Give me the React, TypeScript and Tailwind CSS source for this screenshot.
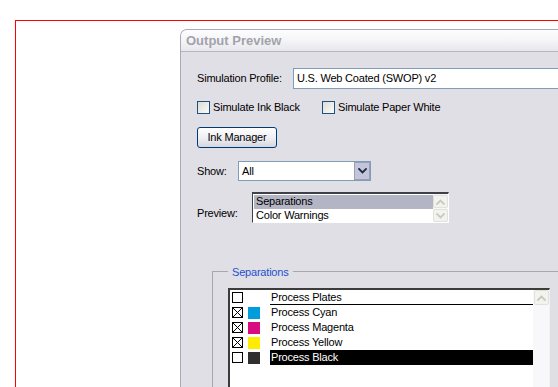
import type { ReactNode } from "react";

function Chevron({ up = false, color = "#1f2a44" }: { up?: boolean; color?: string }) {
  return (
    <svg width="9" height="6" viewBox="0 0 9 6" fill="none">
      <path
        d={up ? "M1 5L4.5 1.5L8 5" : "M1 1L4.5 4.5L8 1"}
        stroke={color}
        strokeWidth="1.8"
        strokeLinecap="square"
      />
    </svg>
  );
}

function XpCheckbox() {
  return (
    <span className="block w-[13px] h-[13px] shrink-0 border border-[#1c5180] bg-gradient-to-br from-[#dcdcd7] to-[#fbfbf9]" />
  );
}

function ListCheck({ checked }: { checked: boolean }) {
  return (
    <span className="block w-[11px] h-[11px] shrink-0 border border-black bg-white">
      {checked && (
        <svg width="9" height="9" viewBox="0 0 9 9" className="block">
          <path d="M0 0L9 9M9 0L0 9" stroke="#000" strokeWidth="1" />
        </svg>
      )}
    </span>
  );
}

function ScrollButton({ up, h }: { up: boolean; h: string }) {
  return (
    <div className={`w-[15px] ${h} flex items-center justify-center rounded-[2px] border border-[#e2e2da] bg-[#f3f3ee]`}>
      <Chevron up={up} color="#c9c9c4" />
    </div>
  );
}

const seps: { name: string; swatch: string; checked: boolean }[] = [
  { name: "Process Cyan", swatch: "bg-[#009ddc]", checked: true },
  { name: "Process Magenta", swatch: "bg-[#d80b80]", checked: true },
  { name: "Process Yellow", swatch: "bg-[#ffec00]", checked: true },
  { name: "Process Black", swatch: "bg-[#2f2f2f]", checked: false },
];

function Row({ children }: { children: ReactNode }) {
  return <div className="flex items-center">{children}</div>;
}

export default function App() {
  return (
    <div className="w-[558px] h-[387px] overflow-hidden bg-white text-black text-[11px] leading-[13px] tracking-[-0.2px] font-['Liberation_Sans',Arial,sans-serif]">
      <div className="mt-[20px] ml-[15px] h-[367px] flex border-t border-l border-[#ff0000] pl-[164px] pt-[8px]">
        <div className="flex-1 flex flex-col rounded-tl-[7px] border-l border-t border-[#a9aab8] bg-[#e0dfe5] overflow-hidden">
          {/* Title bar */}
          <div className="h-[22px] shrink-0 flex items-center pl-[5px] border-b border-[#b4b5c4] bg-gradient-to-b from-[#fdfdfe] via-[#f5f5f8] to-[#e6e6ec]">
            <span className="text-[13px] leading-[16px] font-bold tracking-[0px] text-[#a2a2ab]">Output Preview</span>
          </div>

          {/* Body */}
          <div className="pl-[16px] pt-[16px] flex flex-col">
            <Row>
              <span className="w-[96px] shrink-0">Simulation Profile:</span>
              <div className="w-[300px] h-[21px] shrink-0 flex items-center pl-[3px] border border-[#7f9db9] bg-white">
                U.S. Web Coated (SWOP) v2
              </div>
            </Row>

            <div className="mt-[12px] flex items-center">
              <div className="w-[125px] flex items-center gap-[3px]">
                <XpCheckbox />
                <span>Simulate Ink Black</span>
              </div>
              <div className="flex items-center gap-[3px]">
                <XpCheckbox />
                <span>Simulate Paper White</span>
              </div>
            </div>

            <button className="mt-[13px] w-[80px] h-[21px] flex items-center justify-center rounded-[3px] border border-[#003c74] bg-gradient-to-b from-[#ffffff] via-[#f0f0f4] to-[#d6d6e0]">
              Ink Manager
            </button>

            <div className="mt-[13px] flex items-center">
              <span className="w-[41px] shrink-0">Show:</span>
              <div className="w-[133px] h-[20px] flex items-center border border-[#7f9db9] bg-white">
                <span className="flex-1 pl-[3px]">All</span>
                <div className="w-[16px] h-[18px] flex items-center justify-center border border-[#9aa0bc] bg-[#c3c6d8]">
                  <Chevron />
                </div>
              </div>
            </div>

            <div className="mt-[11px] flex items-end">
              <span className="w-[55px] shrink-0 pb-[3px]">Preview:</span>
              <div className="w-[197px] h-[31px] flex border-t-2 border-l border-t-[#404048] border-l-[#404048] border-r border-b border-r-[#ffffff] border-b-[#ffffff] bg-white">
                <div className="flex-1 flex flex-col pl-[1px] pt-[1px]">
                  <div className="h-[14px] pl-[2px] flex items-center bg-[#b4b5c4]">Separations</div>
                  <div className="h-[14px] pl-[2px] flex items-center">Color Warnings</div>
                </div>
                <div className="w-[15px] flex flex-col pt-[1px] gap-[1px] bg-[#f7f7f9]">
                  <ScrollButton up h="h-[13px]" />
                  <ScrollButton up={false} h="h-[13px]" />
                </div>
              </div>
            </div>

            {/* Separations group */}
            <div className="relative mt-[48px] ml-[15px] h-[200px] border-t border-l border-[#a7a7b0]">
              <span className="absolute left-[15px] top-[-7px] px-[4px] bg-[#e0dfe5] text-[#1f4fd0] leading-[14px]">
                Separations
              </span>
              <div className="mt-[16px] ml-[15px] w-[322px] h-[120px] flex border-t-2 border-l-2 border-t-[#3c3c3c] border-l-[#3c3c3c] border-r border-r-[#f2f2f2] bg-white">
                <div className="flex-1 flex flex-col">
                  <div className="h-[15px] flex items-center pl-[2px]">
                    <ListCheck checked={false} />
                    <span className="w-[17px] shrink-0" />
                    <div className="flex-1 h-[15px] ml-[10px] pl-[1px] flex items-center border-b border-black">Process Plates</div>
                  </div>
                  {seps.map((s, i) => (
                    <div key={s.name} className="h-[15px] flex items-center pl-[2px]">
                      <ListCheck checked={s.checked} />
                      <span className={`ml-[5px] w-[12px] h-[12px] shrink-0 ${s.swatch}`} />
                      <div
                        className={`flex-1 h-[15px] ml-[10px] pl-[1px] flex items-center ${
                          i === seps.length - 1 ? "bg-black text-white" : ""
                        }`}
                      >
                        {s.name}
                      </div>
                    </div>
                  ))}
                </div>
                <div className="w-[16px] flex flex-col bg-[#f8f8fa] pl-[1px]">
                  <ScrollButton up h="h-[15px]" />
                </div>
              </div>
            </div>
          </div>
        </div>
      </div>
    </div>
  );
}
